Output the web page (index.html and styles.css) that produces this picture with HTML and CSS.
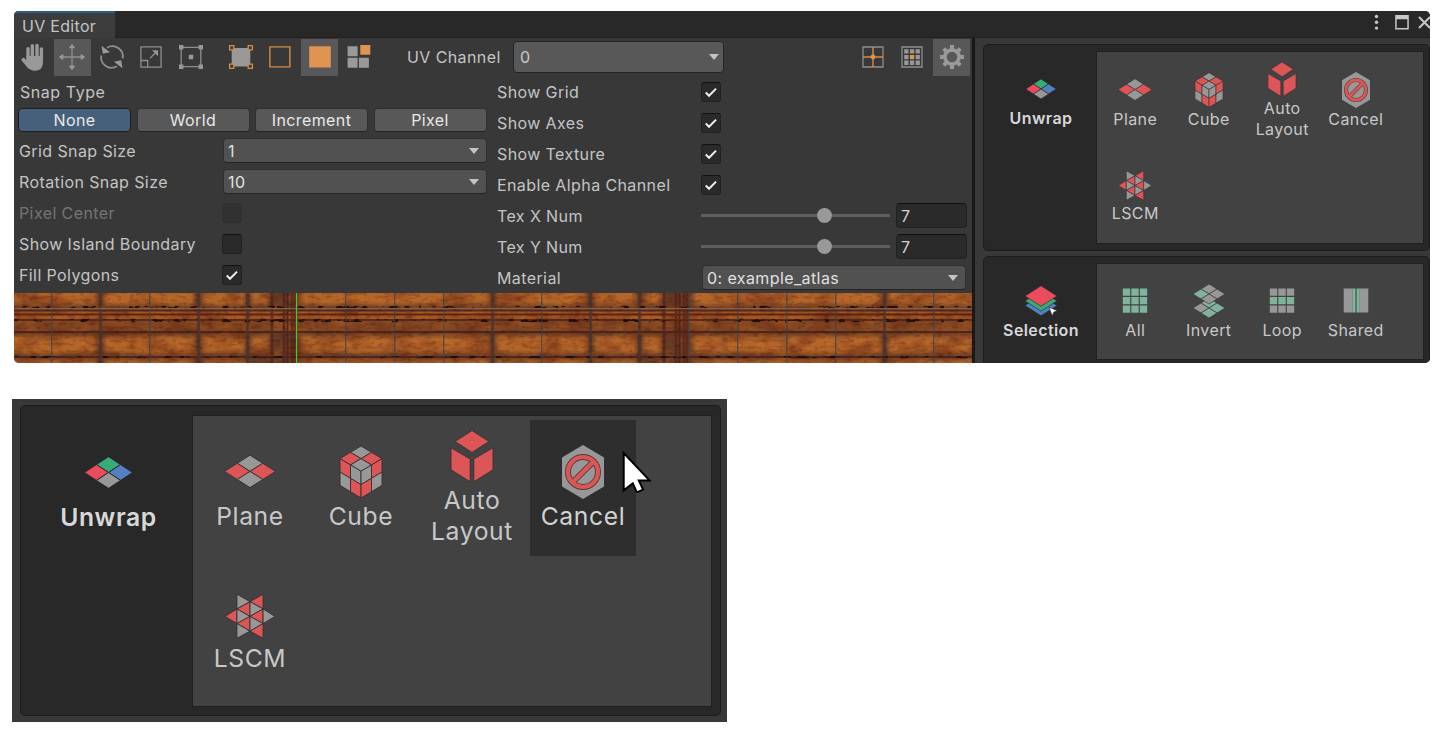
FILE: index.html
```
<!DOCTYPE html>
<html lang="en">
<head>
<meta charset="utf-8">
<title>UV Editor</title>
<link rel="stylesheet" href="styles.css">
</head>
<body>
<svg class="defs" width="0" height="0" aria-hidden="true">
  <symbol id="unwrap" viewBox="0 0 36 36">
    <g class="edge-dark">
      <path class="c-green" d="M18 8l7.6 5-7.6 5-7.6-5z"/>
      <path class="c-crimson" d="M10.4 13l7.6 5-7.6 5-7.6-5z"/>
      <path class="c-blue" d="M25.6 13l7.6 5-7.6 5-7.6-5z"/>
      <path class="c-gray" d="M18 18l7.6 5-7.6 5-7.6-5z"/>
    </g>
  </symbol>
  <symbol id="plane" viewBox="0 0 36 36">
    <g class="edge">
      <path class="c-gray" d="M18 6.8l8.5 5.4-8.5 5.4-8.5-5.4z"/>
      <path class="c-red" d="M9.5 12.2l8.5 5.4-8.5 5.4-8.5-5.4z"/>
      <path class="c-red" d="M26.5 12.2l8.5 5.4-8.5 5.4-8.5-5.4z"/>
      <path class="c-gray" d="M18 17.6l8.5 5.4-8.5 5.4-8.5-5.4z"/>
    </g>
  </symbol>
  <symbol id="cube" viewBox="0 0 36 36">
    <g class="edge">
      <path class="c-gray" d="M18 .7l7 4.2-7 4.2-7-4.2z"/>
      <path class="c-red" d="M11 4.9l7 4.2-7 4.2-7-4.2z"/>
      <path class="c-red" d="M25 4.9l7 4.2-7 4.2-7-4.2z"/>
      <path class="c-gray" d="M18 9.1l7 4.2-7 4.2-7-4.2z"/>
      <path class="c-red" d="M4 9.1l7 4.2v8.9l-7-4.2z"/>
      <path class="c-gray" d="M11 13.3l7 4.2v8.9l-7-4.2z"/>
      <path class="c-gray" d="M4 18l7 4.2v8.9l-7-4.2z"/>
      <path class="c-red" d="M11 22.2l7 4.2v8.9l-7-4.2z"/>
      <path class="c-gray" d="M25 13.3l-7 4.2v8.9l7-4.2z"/>
      <path class="c-red" d="M32 9.1l-7 4.2v8.9l7-4.2z"/>
      <path class="c-red" d="M25 22.2l-7 4.2v8.9l7-4.2z"/>
      <path class="c-gray" d="M32 18l-7 4.2v8.9l7-4.2z"/>
    </g>
  </symbol>
  <symbol id="auto" viewBox="0 0 36 36">
    <g class="edge">
      <path class="c-red" d="M18 1l11.3 7.3L18 15.7 6.7 8.3z"/>
      <path class="c-red" d="M4 12.500L16.800 20v15.200L4 27.200z"/>
      <path class="c-red" d="M32 12.500L19.200 20v15.200L32 27.200z"/>
    </g>
  </symbol>
  <symbol id="cancel" viewBox="0 0 36 36">
    <path class="c-gray" d="M18 0l14 8.3v19.4L18 36 4 27.7V8.3z"/>
    <circle class="ban ban-edge" cx="18" cy="18" r="10"/>
    <path class="ban ban-edge" d="M11.2 24.8L24.8 11.2"/>
    <circle class="ban" cx="18" cy="18" r="10"/>
    <path class="ban" d="M11 25L25 11"/>
  </symbol>
  <symbol id="lscm" viewBox="0 0 36 36">
    <g class="edge" transform="translate(0 1.6)">
      <path class="c-gray" d="M9.3 3.2V13L18 8.2z"/>
      <path class="c-red" d="M26.7 3.2V13L18 8.2z"/>
      <path class="c-red" d="M18 8.2V18l-8.7-5z"/>
      <path class="c-gray" d="M18 8.2V18l8.7-5z"/>
      <path class="c-red" d="M1.3 18l8-5v9.8z"/>
      <path class="c-gray" d="M9.3 13v9.8L18 18z"/>
      <path class="c-red" d="M26.7 13v9.8L18 18z"/>
      <path class="c-gray" d="M34.7 18l-8-5v9.8z"/>
      <path class="c-red" d="M18 18v9.8l-8.7-5z"/>
      <path class="c-gray" d="M18 18v9.8l8.7-5z"/>
      <path class="c-gray" d="M9.3 22.8v9.8l8.7-4.8z"/>
      <path class="c-red" d="M26.7 22.8v9.8L18 27.8z"/>
    </g>
  </symbol>
  <symbol id="layers" viewBox="0 0 36 36">
    <g class="edge-dark">
      <path class="c-blue" d="M18 12.4l16 10.2-16 10.2L2 22.6z"/>
      <path class="c-green" d="M18 7.7l16 10.2-16 10.2L2 17.9z"/>
      <path class="c-crimson" d="M18 2.8L34 13 18 23.3 2 13z"/>
      <path class="c-white" d="M26 24.200l8.400 3.500-3.500 1.200-1.700 3.900z"/>
    </g>
  </symbol>
  <symbol id="all" viewBox="0 0 36 36">
    <path class="c-mint" d="M5.8 5.6h7.4v7.2H5.8zM14.3 5.6h7.4v7.2h-7.4zM22.8 5.6h7.4v7.2h-7.4zM5.8 14.1h7.4v7.2H5.8zM14.3 14.1h7.4v7.2h-7.4zM22.8 14.1h7.4v7.2h-7.4zM5.8 22.6h7.4v7.2H5.8zM14.3 22.6h7.4v7.2h-7.4zM22.8 22.6h7.4v7.2h-7.4z"/>
  </symbol>
  <symbol id="loop" viewBox="0 0 36 36">
    <path class="c-gray" d="M5.8 5.6h7.4v7.2H5.8zM14.3 5.6h7.4v7.2h-7.4zM22.8 5.6h7.4v7.2h-7.4zM5.8 22.6h7.4v7.2H5.8zM14.3 22.6h7.4v7.2h-7.4zM22.8 22.6h7.4v7.2h-7.4z"/>
    <path class="c-mint" d="M5.8 14.1h7.4v7.2H5.8zM14.3 14.1h7.4v7.2h-7.4zM22.8 14.1h7.4v7.2h-7.4z"/>
  </symbol>
  <symbol id="invert" viewBox="0 0 36 36">
    <g class="edge">
      <path class="c-mint" d="M18 15l8 5-8 5-8-5z"/>
      <path class="c-gray" d="M10 20l8 5-8 5-8-5z"/>
      <path class="c-mint" d="M26 20l8 5-8 5-8-5z"/>
      <path class="c-mint" d="M18 25l8 5-8 5-8-5z"/>
      <path class="c-gray" d="M18 1l8 5-8 5-8-5z"/>
      <path class="c-mint" d="M10 6l8 5-8 5-8-5z"/>
      <path class="c-gray" d="M26 6l8 5-8 5-8-5z"/>
      <path class="c-gray" d="M18 11l8 5-8 5-8-5z"/>
    </g>
  </symbol>
  <symbol id="shared" viewBox="0 0 36 36">
    <path class="c-gray" d="M5.7 5.6h8.6v24H5.7zM21.7 5.6h8.6v24h-8.6z"/>
    <path class="c-mint" d="M14.3 5.6h3.2v24h-3.2zM18.6 5.6h3.1v24h-3.1z"/>
  </symbol>
  <symbol id="check" viewBox="0 0 20 20">
    <path class="check-mark" d="M4.200 10.600l3.600 3.600 7.800-8"/>
  </symbol>
</svg>

<div class="window">
  <header class="titlebar">
    <div class="tab">UV Editor</div>
    <svg class="window-controls" viewBox="0 0 60 26" width="60" height="26">
      <circle class="c-light" cx="6.5" cy="5.5" r="1.7"/><circle class="c-light" cx="6.5" cy="11.3" r="1.7"/><circle class="c-light" cx="6.5" cy="17.1" r="1.7"/>
      <path class="c-light" d="M25.2 4h13.6v14.6H25.2zM26.7 8.3v8.8h10.6V8.3z" fill-rule="evenodd"/>
      <path class="cross" d="M49 6l11 11M60 6l-11 11"/>
    </svg>
  </header>
  <div class="content">
    <main class="editor">
      <div class="toolbar">
        <button class="tool" aria-label="Pan"><svg viewBox="0 0 28 28">
          <g class="finger"><path d="M9 5.8V18M13.3 2.6V17M18 2.4V17M22.4 6V17"/><path class="thumb" d="M4.4 16.8l6.1 7.2"/></g>
          <path class="c-tool" d="M7.4 13h16.5v6.8c0 5-3 8-8 8-3.200 0-5.500-1.200-7.200-4z"/></svg></button>
        <button class="tool active" aria-label="Move"><svg viewBox="0 0 28 28">
          <path class="line" d="M14 3v22M3 14h22"/>
          <path class="c-tool" d="M14 .7l3.300 4.600h-6.600zM14 27.300l3.300-4.600h-6.600zM.7 14l4.600-3.300v6.600zM27.300 14l-4.600-3.300v6.600z"/></svg></button>
        <button class="tool" aria-label="Rotate"><svg viewBox="0 0 28 28">
          <path class="line thick" d="M9 4.700A10.500 10.500 0 0 1 24.700 15.500M3.300 12.500A10.500 10.500 0 0 0 19 23.300"/>
          <path class="c-tool" d="M3.500 2.800l1.300 8 7.200-1.500zM24.500 25.200l-1.300-8-7.200 1.500z"/></svg></button>
        <button class="tool" aria-label="Scale"><svg viewBox="0 0 28 28">
          <path class="line" d="M3.900 3.900h20.200v20.200H3.900zM3.900 17.500h6.800v6.600M13 15.300l6-6"/>
          <path class="c-tool" d="M21 7.300v6l-6-6z"/></svg></button>
        <button class="tool" aria-label="Rect"><svg viewBox="0 0 28 28">
          <path class="line" d="M4.200 4.300h19.600v19.400H4.200z"/>
          <path class="c-tool" d="M2 2h4.400v4.400H2zM21.600 2H26v4.400h-4.400zM2 21.600h4.400V26H2zM21.600 21.600H26V26h-4.400zM11.800 11.800h4.400v4.400h-4.400z"/></svg></button>
        <span class="spacer"></span>
        <button class="tool" aria-label="Vertices"><svg viewBox="0 0 28 28">
          <path class="c-tool" d="M4.700 4.900h18.600v18.600H4.700z"/>
          <path class="corner" d="M2.600 2.600h4.200v4.200H2.600zM21.200 2.600h4.200v4.200h-4.200zM2.600 21.200h4.200v4.200H2.600zM21.200 21.200h4.200v4.200h-4.200z"/></svg></button>
        <button class="tool" aria-label="Edges"><svg viewBox="0 0 28 28"><path class="orange-line" d="M3.900 3.900h20v20h-20z"/></svg></button>
        <button class="tool active" aria-label="Faces"><svg viewBox="0 0 28 28"><path class="c-orange" d="M3.200 3.200h21.600v21.400H3.200z"/></svg></button>
        <button class="tool" aria-label="Islands"><svg viewBox="0 0 28 28">
          <path class="c-tool" d="M2.600 3.300h10v10h-10zM2.600 14.700h10v10h-10zM13.900 14.700h10v10h-10z"/>
          <path class="c-orange" d="M15.300 2h10v9.800h-10z"/></svg></button>
        <label class="channel-label">UV Channel</label>
        <div class="select select-tall"><span>0</span><i class="arrow"></i></div>
        <div class="toolbar-end">
          <button class="tool" aria-label="Axes"><svg viewBox="0 0 28 28">
            <path class="line" d="M4 4h20v20H4z"/>
            <path class="orange-line" d="M14 4v20M4 14h20"/><circle class="c-orange" cx="14" cy="14" r="2.400"/></svg></button>
          <button class="tool" aria-label="Texture grid"><svg viewBox="0 0 28 28">
            <path class="line" d="M4 4h20v20H4z"/>
            <path class="c-tool" d="M6.200 6.200h4.300v4.300H6.200zM11.900 6.200h4.300v4.300h-4.300zM17.600 6.200h4.300v4.300h-4.300zM6.200 11.900h4.300v4.300H6.200zM17.600 11.900h4.300v4.300h-4.300zM6.200 17.600h4.300v4.300H6.200zM11.900 17.600h4.300v4.300h-4.300zM17.600 17.600h4.300v4.300h-4.300z"/>
            <path class="c-orange" d="M11.900 11.900h4.300v4.300h-4.300z"/></svg></button>
          <button class="tool active" aria-label="Settings"><svg viewBox="0 0 28 28">
            <circle class="gear-ring" cx="14" cy="14" r="7.100"/>
            <path class="gear-teeth" d="M14 6V2M14 22v4M6 14H2M22 14h4M8.300 8.300L5.700 5.700M19.700 19.700l2.600 2.600M19.700 8.300l2.600-2.600M8.300 19.700l-2.600 2.600"/></svg></button>
        </div>
      </div>

      <div class="settings">
        <section class="column-left">
          <div class="row snap-title">Snap Type</div>
          <div class="segments">
            <button class="segment selected">None</button><button class="segment">World</button><button class="segment">Increment</button><button class="segment">Pixel</button>
          </div>
          <div class="row"><label>Grid Snap Size</label><div class="select"><span>1</span><i class="arrow"></i></div></div>
          <div class="row"><label>Rotation Snap Size</label><div class="select"><span>10</span><i class="arrow"></i></div></div>
          <div class="row disabled"><label>Pixel Center</label><span class="checkbox"></span></div>
          <div class="row"><label>Show Island Boundary</label><span class="checkbox"></span></div>
          <div class="row"><label>Fill Polygons</label><span class="checkbox"><svg><use href="#check"/></svg></span></div>
        </section>
        <section class="column-right">
          <div class="row"><label>Show Grid</label><span class="checkbox"><svg><use href="#check"/></svg></span></div>
          <div class="row"><label>Show Axes</label><span class="checkbox"><svg><use href="#check"/></svg></span></div>
          <div class="row"><label>Show Texture</label><span class="checkbox"><svg><use href="#check"/></svg></span></div>
          <div class="row"><label>Enable Alpha Channel</label><span class="checkbox"><svg><use href="#check"/></svg></span></div>
          <div class="row"><label>Tex X Num</label><div class="slider"><span class="track"></span><span class="knob"></span><span class="track track-rest"></span></div><div class="field">7</div></div>
          <div class="row"><label>Tex Y Num</label><div class="slider"><span class="track"></span><span class="knob"></span><span class="track track-rest"></span></div><div class="field">7</div></div>
          <div class="row"><label>Material</label><div class="select"><span>0: example_atlas</span><i class="arrow"></i></div></div>
        </section>
      </div>

      <svg class="viewport" width="958" height="70" viewBox="0 0 958 70">
        <defs>
          <filter id="soft" x="-5%" y="-20%" width="110%" height="140%"><feGaussianBlur stdDeviation="2"/></filter>
          <filter id="rust" x="0" y="0" width="100%" height="100%" color-interpolation-filters="sRGB">
            <feTurbulence type="fractalNoise" baseFrequency=".04 .06" numOctaves="5" seed="8"/>
            <feColorMatrix values="0 0 0 0 .42  0 0 0 0 .17  0 0 0 0 .09  2.400 0 0 0 -.950"/>
          </filter>
          <filter id="glow" x="0" y="0" width="100%" height="100%" color-interpolation-filters="sRGB">
            <feTurbulence type="fractalNoise" baseFrequency=".05 .09" numOctaves="4" seed="21"/>
            <feColorMatrix values="0 0 0 0 .82  0 0 0 0 .44  0 0 0 0 .14  0 2.400 0 0 -1"/>
          </filter>
          <filter id="specks" x="0" y="0" width="100%" height="100%" color-interpolation-filters="sRGB">
            <feTurbulence type="fractalNoise" baseFrequency=".13 .3" numOctaves="3" seed="4"/>
            <feColorMatrix values="0 0 0 0 .13  0 0 0 0 .05  0 0 0 0 .04  0 0 9 0 -4.900"/>
          </filter>
          <pattern id="panels" x="282.500" y="0" width="392" height="70" patternUnits="userSpaceOnUse">
            <rect width="392" height="70" fill="#633a24"/>
            <g filter="url(#soft)" fill="#b4662a">
              <rect x="5" y="-8" width="187" height="20"/><rect x="200" y="-8" width="90" height="20"/><rect x="298" y="-8" width="42" height="20"/><rect x="347" y="-8" width="17" height="20"/>
              <rect x="5" y="43" width="187" height="17"/><rect x="200" y="43" width="90" height="17"/><rect x="298" y="43" width="42" height="17"/><rect x="347" y="43" width="17" height="17"/>
              <rect x="5" y="67" width="187" height="10"/><rect x="200" y="67" width="90" height="10"/><rect x="298" y="67" width="42" height="10"/>
            </g>
            <rect y="28" width="392" height="10" fill="#814723"/>
            <rect y="15" width="392" height="12" fill="#a5561f"/>
          </pattern>
          <pattern id="seams" x="282.500" y="0" width="392" height="70" patternUnits="userSpaceOnUse">
            <path d="M0 17.500h392M0 21.500h392M0 26.800h392M0 39h392M0 64h392" stroke="#4b201a" stroke-width="1.800"/>
            <path d="M196 0v70M294 0v70M343 0v70M367.500 0v70M379.500 0v70" stroke="#4b231c" stroke-width="2.400"/>
            <path d="M383 0v70M387.500 0v70M390.500 0v70" stroke="#4f1f1a" stroke-width="2"/>
          </pattern>
          <pattern id="grid" x="282.300" y="0" width="49" height="70" patternUnits="userSpaceOnUse"><path d="M.5 0v70" stroke="#3b4144" stroke-width="1"/></pattern>
        </defs>
        <rect width="958" height="70" fill="url(#panels)"/>
        <rect width="958" height="70" filter="url(#rust)" opacity=".65"/>
        <rect width="958" height="70" filter="url(#glow)" opacity=".3"/>
        <rect width="958" height="70" fill="url(#seams)" opacity=".85"/>
        <rect width="958" height="70" filter="url(#specks)" opacity=".15"/>
        <rect y="13" width="958" height="2.500" filter="url(#specks)"/>
        <rect y="26" width="958" height="2.500" filter="url(#specks)"/>
        <rect y="63" width="958" height="2" filter="url(#specks)"/>
        <rect width="958" height="70" fill="url(#grid)"/>
        <path d="M0 15.500h958" stroke="#766553"/>
        <path d="M282.500 0v70" stroke="#50c820" stroke-width="1.200"/>
      </svg>
    </main>

    <aside class="sidebar">
      <div class="group">
        <div class="group-title"><svg class="icon"><use href="#unwrap"/></svg>Unwrap</div>
        <div class="actions two-rows">
          <button class="action"><svg class="icon"><use href="#plane"/></svg>Plane</button>
          <button class="action"><svg class="icon"><use href="#cube"/></svg>Cube</button>
          <button class="action"><svg class="icon"><use href="#auto"/></svg>Auto<br>Layout</button>
          <button class="action"><svg class="icon"><use href="#cancel"/></svg>Cancel</button>
          <button class="action"><svg class="icon"><use href="#lscm"/></svg>LSCM</button>
        </div>
      </div>
      <div class="group">
        <div class="group-title"><svg class="icon"><use href="#layers"/></svg>Selection</div>
        <div class="actions">
          <button class="action"><svg class="icon"><use href="#all"/></svg>All</button>
          <button class="action"><svg class="icon"><use href="#invert"/></svg>Invert</button>
          <button class="action"><svg class="icon"><use href="#loop"/></svg>Loop</button>
          <button class="action"><svg class="icon"><use href="#shared"/></svg>Shared</button>
        </div>
      </div>
    </aside>
  </div>
</div>

<div class="closeup">
  <div class="group">
    <div class="group-title"><svg class="icon"><use href="#unwrap"/></svg>Unwrap</div>
    <div class="actions">
      <button class="action"><svg class="icon"><use href="#plane"/></svg>Plane</button>
      <button class="action"><svg class="icon"><use href="#cube"/></svg>Cube</button>
      <button class="action"><svg class="icon"><use href="#auto"/></svg>Auto<br>Layout</button>
      <button class="action hovered"><svg class="icon"><use href="#cancel"/></svg>Cancel
        <svg class="cursor" viewBox="0 0 30 42" width="30" height="42"><path d="M1.700 2v37.400l9.100-7 4 8.900 6.300-2.700-4.300-9.200h10.700z"/></svg></button>
      <button class="action"><svg class="icon"><use href="#lscm"/></svg>LSCM</button>
    </div>
  </div>
</div>
</body>
</html>
```
FILE: styles.css
```
* { box-sizing: border-box; }

body {
  margin: 0;
  padding: 11px 0 0 12px;
  background: #fff;
  color: #c4c4c4;
  font: 16px/20px Inter, "Liberation Sans", sans-serif;
  letter-spacing: 0.4px;
}

button {
  margin: 0;
  padding: 0;
  border: 0;
  background: none;
  color: inherit;
  font: inherit;
  letter-spacing: inherit;
}

.defs { display: block; height: 0; }

/* Icon palette */
.c-red { fill: #dc5658; }
.c-crimson { fill: #ea4b5d; }
.c-green { fill: #35ad75; }
.c-blue { fill: #5480c2; }
.c-gray { fill: #989898; }
.c-mint { fill: #7fb39b; }
.c-white { fill: #fff; }
.c-light { fill: #c8c8c8; }
.c-tool { fill: #999; }
.c-orange { fill: #df9551; }
.edge { stroke: #383030; stroke-width: 0.6; stroke-linejoin: round; }
.edge-dark { stroke: #262626; stroke-width: 0.6; stroke-linejoin: round; }
.ban { fill: none; stroke: #dc5658; stroke-width: 2.800; }
.ban-edge { stroke: #543a3a; stroke-width: 4; }
.check-mark { fill: none; stroke: #eee; stroke-width: 2.200; }
.cross { fill: none; stroke: #c8c8c8; stroke-width: 2; }
.line { fill: none; stroke: #8e8e8e; stroke-width: 1.300; }
.thick { stroke-width: 1.800; }
.orange-line { fill: none; stroke: #d48c4a; stroke-width: 1.400; }
.corner { fill: #3a3a3a; stroke: #d48c4a; stroke-width: 1.300; }
.finger { fill: none; stroke: #999; stroke-width: 3.400; stroke-linecap: round; }
.thumb { stroke-width: 3.800; }
.gear-ring { fill: none; stroke: #999; stroke-width: 3.600; }
.gear-teeth { stroke: #999; stroke-width: 4; }

/* Editor window */
.window {
  width: 1416px;
  height: 352px;
  margin-left: 2px;
  overflow: hidden;
  border-radius: 5px;
  background: #383838;
}

.titlebar {
  display: flex;
  justify-content: space-between;
  height: 27px;
  background: #282828;
  border-bottom: 1px solid #202020;
}

.tab {
  width: 101px;
  height: 27px;
  padding: 4px 0 0 8px;
  border-top: 2px solid #2c5d87;
  background: #3c3c3c;
  letter-spacing: 0.3px;
  line-height: 19px;
}

.content { display: flex; height: 325px; }
.editor { width: 958px; flex: none; }

.toolbar {
  display: flex;
  align-items: center;
  height: 38px;
}

.tool {
  display: grid;
  place-items: center;
  width: 37px;
  height: 37px;
  margin-right: 2.500px;
}
.tool.active { background: #585858; }
.tool svg { display: block; width: 28px; height: 28px; }
.spacer { width: 10.500px; }
.channel-label { margin-left: 27px; width: 106px; }
.toolbar-end { display: flex; margin-left: auto; }
.toolbar-end .tool:last-child { margin-right: 2px; }

.select {
  display: flex;
  align-items: center;
  justify-content: space-between;
  width: 264px;
  height: 25px;
  padding: 0 7px 0 4px;
  border: 1px solid #303030;
  border-bottom-color: #242424;
  border-radius: 4px;
  background: #515151;
  color: #e0e0e0;
}
.select-tall {
  width: 211px;
  height: 32px;
  padding: 0 4px 0 6px;
  border-color: #242424;
  background: #585858;
  color: #c8c8c8;
}
.arrow {
  border: 5.500px solid transparent;
  border-top: 6px solid #c4c4c4;
  border-bottom: 0;
}

.settings {
  display: grid;
  grid-template-columns: 483px 475px;
  height: 217px;
}
.column-left { padding-left: 4px; }
.row { display: flex; align-items: center; height: 31px; }
.row .select { margin-left: 1px; }
.column-left .row { padding-left: 1px; }
.column-left .row.snap-title { padding-left: 2px; letter-spacing: 0.550px; }
.column-left label { width: 203px; }
.column-right label { width: 204px; }

.segments {
  display: flex;
  gap: 5.500px;
  height: 28px;
  padding-top: 1px;
}
.segment {
  width: 113px;
  height: 24px;
  border: 1px solid #303030;
  border-bottom-color: #222;
  border-radius: 4px;
  background: #585858;
  color: #e8e8e8;
  line-height: 20px;
}
.segment.selected { border-color: #1c1c1c; background: #46607c; }

.checkbox {
  width: 20px;
  height: 20px;
  border: 1px solid #212121;
  border-top-color: #111;
  border-radius: 3px;
  background: #2a2a2a;
}
.checkbox svg { display: block; width: 18px; height: 18px; }
.disabled label { color: #747474; }
.disabled .checkbox { border-color: #303030; background: #313131; }

.slider { display: flex; align-items: center; width: 189px; }
.track { width: 116px; height: 3px; background: #5e5e5e; }
.track-rest { width: auto; flex: 1; }
.knob { width: 15px; height: 15px; border-radius: 50%; background: #999; }
.field {
  width: 71px;
  height: 25px;
  margin-left: 6px;
  padding-left: 4px;
  border: 1px solid #212121;
  border-top-color: #0f0f0f;
  border-radius: 4px;
  background: #2a2a2a;
  color: #d2d2d2;
  line-height: 24px;
}

.viewport { display: block; }

/* Action groups */
.sidebar {
  display: flex;
  flex-direction: column;
  gap: 5px;
  flex: 1;
  padding: 6px 0 0 8px;
  border-left: 3px solid #191919;
}
.group {
  display: flex;
  flex: none;
  padding: 6px 5px 6px 0;
  border: 1px solid #1c1c1c;
  border-radius: 5px;
  background: #282828;
  line-height: 21px;
}
.group-title {
  display: flex;
  flex-direction: column;
  align-items: center;
  width: 112px;
  padding: 20px 0 0 2px;
  color: #d8d8d8;
  font-weight: 600;
}
.actions {
  display: grid;
  grid-template-columns: repeat(4, 70.500px);
  grid-auto-rows: 90px;
  gap: 4px 3px;
  flex: 1;
  height: 97px;
  padding: 3px 0 0 3px;
  border: 1px solid #202020;
  background: #424242;
}
.two-rows { height: 193px; padding-top: 4px; }
.action {
  position: relative;
  display: flex;
  flex-direction: column;
  align-items: center;
  justify-content: center;
  color: #c8c8c8;
}
.icon { display: block; flex: none; width: 36px; height: 36px; margin: -1px 0 1px; }
.group-title .icon { margin: 0 0 1px; }

/* Enlarged group */
.closeup {
  width: 715px;
  height: 323px;
  margin-top: 36px;
  padding: 6px 6px 6px 8px;
  background: #383838;
  font-size: 24.700px;
  letter-spacing: 0.6px;
}
.closeup .group { height: 311px; padding: 9px 8px 8px 0; line-height: 31px; }
.closeup .group-title { width: 171px; padding: 29px 0 0 4px; }
.closeup .actions {
  grid-template-columns: repeat(4, 106px);
  grid-auto-rows: 136px;
  gap: 6px 5px;
  height: 292px;
  padding: 4px 0 0 4px;
}
.closeup .icon { width: 54px; height: 54px; margin: 0 0 2px; }
.closeup .group-title .icon { width: 57px; height: 57px; margin: 0 0 1px; }
.hovered { background: #2e2e2e; color: #d2d2d2; }
.cursor { position: absolute; left: 92px; top: 31px; }
.cursor path { fill: #fff; stroke: #000; stroke-width: 2; }
```
